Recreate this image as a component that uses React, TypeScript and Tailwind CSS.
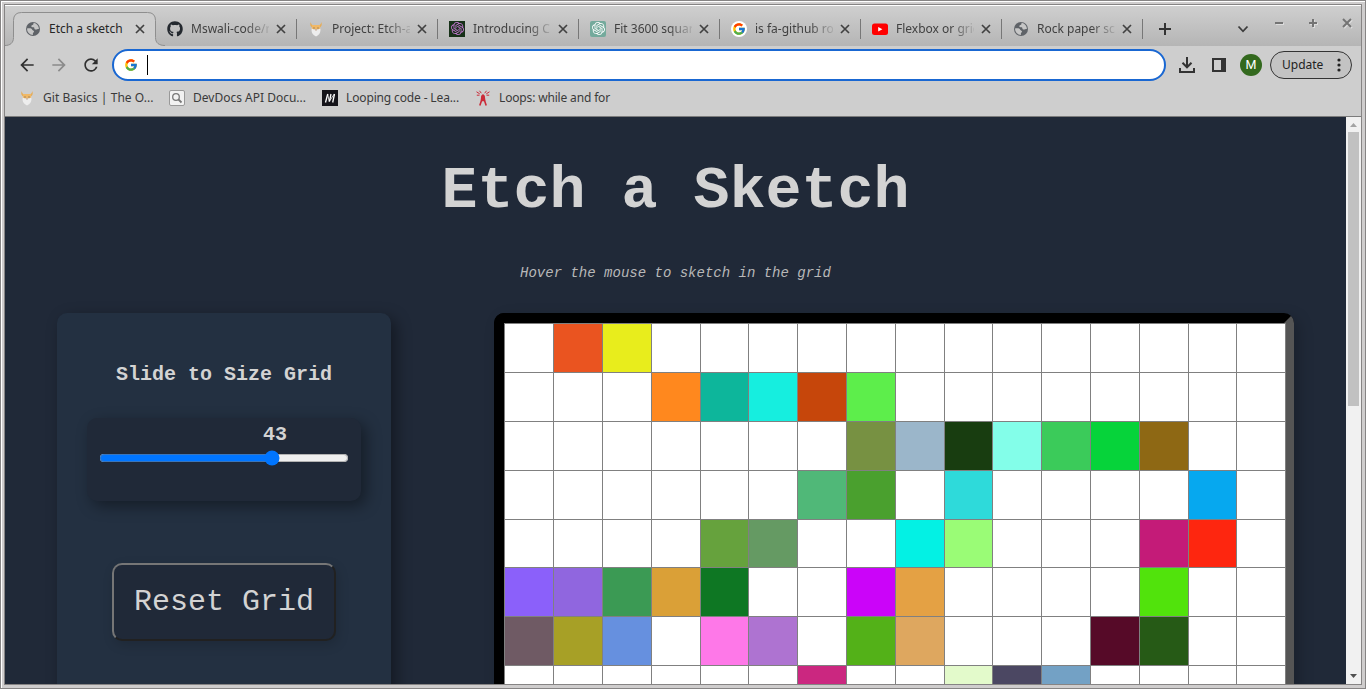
import { useState, type ReactNode } from "react";
import { FaGithub } from "react-icons/fa";
import { SiOpenai } from "react-icons/si";
import { FcGoogle } from "react-icons/fc";
import { MdArrowBack, MdArrowForward, MdRefresh } from "react-icons/md";

const Globe = () => (
  <svg width="16" height="16" viewBox="0 0 16 16">
    <circle cx="8" cy="8" r="7" fill="#5f6368" />
    <path d="M8.6 1.8c-.3.9.2 1.3-.6 2-.8.6-1.700.5-1.700 1.500 0 .9.9 1 1.800 1 1 0 1.300.5 1.300 1.300 0 .7.6 1 1.400 1 1 0 1.600-.4 3.100-.5A6.100 6.100 0 0 0 8.600 1.800z" fill="#c6c6c6" />
    <path d="M2 7.500c1.500-.2 3.600-.3 4.500.3.8.6.6 1.300 1.500 1.600.9.3 1.200.8.9 1.500-.3.6-1 .6-1 1.400v1.600A6.100 6.100 0 0 1 2 7.500z" fill="#c6c6c6" />
  </svg>
);

const Fox = () => (
  <svg width="16" height="16" viewBox="0 0 16 16">
    <path d="M2.800 1c.1 2 1 3.200 2.700 3.200h5c1.700 0 2.600-1.200 2.700-3.200 1 2 .6 4-.7 5h-9C2.200 5 1.800 3 2.800 1z" fill="#e5ad5a" />
    <path d="M4 4h8l.2 4.500H3.800z" fill="#f0b866" />
    <path d="M3.600 7.500 6 8.500h4l2.400-1c.3 3-.4 5.500-2.400 6.800L8 15.500l-2-1.200C4 13 3.300 10.500 3.600 7.500z" fill="#ededed" />
    <path d="M5.400 6.500h1.200v1H5.400zM9.400 6.500h1.200v1H9.400z" fill="#806851" />
    <path d="M7 8.600h2L8 10z" fill="#b88f72" />
  </svg>
);

const Youtube = () => (
  <svg width="16" height="16" viewBox="0 0 16 16">
    <rect x="0" y="2.500" width="16" height="11.500" rx="2.500" fill="#f00" />
    <path d="M6.200 6v4.600l4.200-2.300z" fill="#fff" />
  </svg>
);

const Tower = () => (
  <svg width="16" height="16" viewBox="0 0 16 16" fill="none" stroke="#cb2a38">
    <path d="M4.500.8l1.800 2.400M11.500.8 9.700 3.200M1.500 1.800l3.200 2M14.500 1.800l-3.200 2M1.800 5.200h2.700M14.200 5.200h-2.700" strokeWidth="1" />
    <path d="M7 6 6.300 11 4.800 15.600M9 6l.7 5 1.500 4.600" strokeWidth="1.600" />
    <path d="M6.700 5.200 8 3.900l1.300 1.300.3 6H6.400z" fill="#cb2a38" stroke="none" />
  </svg>
);

const Close = () => (
  <svg width="16" height="16" viewBox="0 0 16 16" className="shrink-0">
    <path d="M4 4l8 8M12 4l-8 8" stroke="#414141" strokeWidth="1.700" />
  </svg>
);

const tabs: { title: string; icon: ReactNode }[] = [
  { title: "Etch a sketch", icon: <Globe /> },
  { title: "Mswali-code/rock", icon: <FaGithub size={16} color="#24292f" /> },
  { title: "Project: Etch-a-Sketch", icon: <Fox /> },
  {
    title: "Introducing ChatGPT",
    icon: (
      <span className="flex size-4 items-center justify-center bg-[#173118]">
        <SiOpenai size={13} color="#c678d4" />
      </span>
    ),
  },
  {
    title: "Fit 3600 squares",
    icon: (
      <span className="flex size-4 items-center justify-center rounded-[2px] bg-[#74aa9c]">
        <SiOpenai size={13} color="#fff" />
      </span>
    ),
  },
  {
    title: "is fa-github rotate",
    icon: (
      <span className="flex size-4 items-center justify-center rounded-full bg-white">
        <FcGoogle size={14} />
      </span>
    ),
  },
  { title: "Flexbox or grid", icon: <Youtube /> },
  { title: "Rock paper scissors", icon: <Globe /> },
];

function TabStrip() {
  return (
    <div className="flex h-[41px] border-t border-white bg-linear-to-b from-[#cfcfcf] to-[#b5b5b5] pl-2">
      {tabs.map((tab, i) => (
        <div
          key={tab.title}
          className={
            i === 0
              ? "relative flex h-[40px] w-[142px] shrink-0 items-center pt-[5px] pl-[12px]"
              : "flex h-[40px] w-[141px] shrink-0 items-center pt-[5px] pl-[12px]"
          }
        >
          {i === 0 && (
            <svg className="absolute top-[6px] -left-[8px]" width="160" height="35" viewBox="0 0 160 35">
              <path d="M0 33.500C5 33.500 8.500 31 8.500 25.500V8.500Q8.500.5 16.500.5H142.500Q150.500.5 150.500 8.500V25.500C150.500 31 154 33.500 160 33.500V35H0z" fill="#cecece" />
              <path d="M0 33.500C5 33.500 8.500 31 8.500 25.500V8.500Q8.500.5 16.500.5H142.500Q150.500.5 150.500 8.500V25.500C150.500 31 154 33.500 160 33.500" fill="none" stroke="#8e8e8e" />
            </svg>
          )}
          <span className="relative size-4 shrink-0">{tab.icon}</span>
          <span
            className={
              i === 0
                ? "relative ml-2 w-[83px] overflow-hidden whitespace-nowrap text-[#262626]"
                : "ml-2 mr-[4px] w-[78px] shrink-0 overflow-hidden whitespace-nowrap text-[#414141] [mask-image:linear-gradient(to_right,black_54px,transparent_82px)]"
            }
          >
            {tab.title}
          </span>
          <span className="relative">
            <Close />
          </span>
          {i > 0 && <span className="-mr-px ml-[7px] h-5 w-px shrink-0 bg-[#777]" />}
        </div>
      ))}
      <div className="flex flex-1 items-center pt-[5px]">
        <svg className="ml-[15px]" width="16" height="16" viewBox="0 0 16 16">
          <path d="M8 2v12M2 8h12" stroke="#333" strokeWidth="2" />
        </svg>
        <svg className="ml-[62px]" width="16" height="16" viewBox="0 0 16 16">
          <path d="M3.500 5.500 8 10.300l4.500-4.800" fill="none" stroke="#3c3c3c" strokeWidth="1.800" />
        </svg>
        <div className="-mt-[12px] ml-[20px] flex gap-[18px] [filter:drop-shadow(1px_1px_0_#ddd)]">
          <svg width="16" height="16" viewBox="0 0 16 16">
            <path d="M4 8h8" stroke="#747474" strokeWidth="2" />
          </svg>
          <svg width="16" height="16" viewBox="0 0 16 16">
            <path d="M4 8h8M8 4v8" stroke="#747474" strokeWidth="2" />
          </svg>
          <svg width="16" height="16" viewBox="0 0 16 16">
            <path d="M4 4l8 8M12 4l-8 8" stroke="#747474" strokeWidth="2" />
          </svg>
        </div>
      </div>
    </div>
  );
}

function Toolbar() {
  return (
    <div className="flex h-[38px] items-center pl-3">
      <MdArrowBack size={20} color="#303030" />
      <MdArrowForward size={20} color="#8b8b8b" className="ml-3" />
      <MdRefresh size={20} color="#303030" className="ml-3" />
      <div className="ml-[11px] flex h-8 w-[1054px] items-center rounded-full border-2 border-[#1967d2] bg-white pl-[10px]">
        <FcGoogle size={14} />
        <span className="ml-[9px] h-5 w-px bg-black" />
      </div>
      <svg className="ml-[13px]" width="16" height="16" viewBox="0 0 16 16" fill="none" stroke="#333" strokeWidth="2">
        <path d="M8 0v10M3.500 5.800 8 10.300l4.500-4.500M1 11v4h14v-4" />
      </svg>
      <svg className="ml-[17px]" width="14" height="14" viewBox="0 0 14 14">
        <path d="M0 0h14v14H0zM2 2v10h7V2z" fill="#333" fillRule="evenodd" />
      </svg>
      <span className="ml-[14px] flex size-[22px] items-center justify-center rounded-full bg-[#33691e] font-[Roboto,sans-serif] text-[12.500px] text-white">
        M
      </span>
      <div className="ml-2 flex h-7 w-[82px] items-center rounded-full border border-[#333] bg-[#c3c3c3] pl-[11px] text-[12px] text-[#222]">
        Update
        <svg className="ml-auto mr-[10px]" width="4" height="14" viewBox="0 0 4 14" fill="#222">
          <circle cx="2" cy="2" r="1.600" />
          <circle cx="2" cy="7" r="1.600" />
          <circle cx="2" cy="12" r="1.600" />
        </svg>
      </div>
    </div>
  );
}

function Bookmarks() {
  return (
    <div className="flex h-[32px] items-center pb-[5px] pl-[14px] text-[#3a3a3a]">
      <div className="flex w-[150px] items-center gap-2 tracking-[0.05px]">
        <Fox />
        Git Basics | The O...
      </div>
      <div className="flex w-[153px] items-center gap-2">
        <svg width="16" height="16" viewBox="0 0 16 16" fill="none">
          <rect x=".5" y=".5" width="15" height="15" rx="1.500" fill="#f2f2f2" stroke="#999" />
          <circle cx="7" cy="7" r="3.300" stroke="#777" strokeWidth="1.300" />
          <path d="M9.500 9.500 12.500 12.500" stroke="#777" strokeWidth="1.800" />
        </svg>
        DevDocs API Docu...
      </div>
      <div className="flex w-[153px] items-center gap-2 tracking-[-0.14px]">
        <svg width="16" height="16" viewBox="0 0 16 16" fill="none" stroke="#fff">
          <path d="M0 0h16v16H0z" fill="#15141a" stroke="none" />
          <path d="M3.500 12.500 5.700 4M7.400 11.500 9 4M10.700 12.500 12.500 4" strokeWidth="1.300" />
          <path d="M5.700 4 7.200 11.500 12.300 4" strokeWidth=".8" />
        </svg>
        Looping code - Lea...
      </div>
      <div className="flex items-center gap-2 tracking-[-0.16px]">
        <Tower />
        Loops: while and for
      </div>
    </div>
  );
}

const COLUMNS = 16;
const sketch: Record<number, string>[] = [
  { 1: "#ea5420", 2: "#e8ed1c" },
  { 3: "#ff881e", 4: "#0db69b", 5: "#16eedf", 6: "#c6460b", 7: "#5dee4b" },
  { 7: "#779142", 8: "#9bb6ca", 9: "#183d10", 10: "#83fee9", 11: "#3bcb5a", 12: "#06d33a", 13: "#8e6814" },
  { 6: "#50b878", 7: "#4aa02e", 9: "#2edada", 14: "#06a8ef" },
  { 4: "#66a23d", 5: "#659a63", 8: "#03f1e4", 9: "#9afc76", 13: "#c41b78", 14: "#fe260f" },
  { 0: "#8b60fa", 1: "#9066df", 2: "#3b9a54", 3: "#daa037", 4: "#0e7723", 7: "#cb04f9", 8: "#e4a144", 13: "#51e30c" },
  { 0: "#6f5a64", 1: "#a7a026", 2: "#6690df", 4: "#fe78e8", 5: "#ae73d1", 7: "#53b118", 8: "#dea75f", 12: "#560a28", 13: "#265a16" },
  { 6: "#cb2780", 9: "#e3facb", 10: "#4b4762", 11: "#73a1c5" },
];

function SketchGrid() {
  return (
    <div className="ml-[103px] h-[800px] w-[800px] shrink-0 rounded-[10px] border-10 border-t-black border-r-[#555] border-b-[#555] border-l-black pt-[0.4px] pl-[0.4px] shadow-[5px_5px_15px_rgba(0,0,0,0.2)]">
      <div className="grid w-[781.8px] auto-rows-[48.8px] grid-cols-[repeat(16,48.8px)] border-r border-[#808080] bg-white">
        {sketch.flatMap((row, r) =>
          Array.from({ length: COLUMNS }, (_, c) => (
            <div key={`${r}-${c}`} className="border-t border-l border-[#808080]" style={{ backgroundColor: row[c] ?? "#ffffff" }} />
          )),
        )}
      </div>
    </div>
  );
}

function Page() {
  const [size, setSize] = useState(43);
  return (
    <main className="h-[567px] flex-1 overflow-hidden bg-[#202938] font-['Liberation_Mono',monospace] text-[#d3d3d3]">
      <h1 className="pt-[40px] text-center text-[60px] leading-[68px] font-bold">Etch a Sketch</h1>
      <p className="mt-[40px] text-center text-[14px] leading-4 text-[#b8b8b8] italic">Hover the mouse to sketch in the grid</p>
      <div className="mt-[32px] flex pl-[52px]">
        <section className="flex h-[800px] w-[334px] shrink-0 flex-col items-center rounded-[10px] bg-[#233041] shadow-[5px_5px_15px_rgba(0,0,0,0.4)]">
          <h2 className="mt-[50px] text-[20px] leading-6 font-bold">Slide to Size Grid</h2>
          <div className="mt-[31px] flex h-[83px] w-[274px] flex-col rounded-[10px] bg-[#202938] pt-[5px] pl-[12px] shadow-[5px_5px_15px_rgba(0,0,0,0.4)]">
            <output className="ml-[163px] w-[26px] text-center text-[20px] leading-6 font-bold">{size}</output>
            <input
              type="range"
              min={2}
              max={60}
              value={size}
              onChange={(e) => setSize(Number(e.target.value))}
              className="mt-[3px] h-4 w-[250px]"
            />
          </div>
          <button className="mt-[62px] h-[78px] w-[224px] rounded-[10px] border-2 border-t-[#767676] border-r-[#212121] border-b-[#212121] border-l-[#767676] bg-[#202938] text-[30px] shadow-[2px_4px_12px_rgba(0,0,0,0.15)]">
            Reset Grid
          </button>
        </section>
        <SketchGrid />
      </div>
    </main>
  );
}

function Scrollbar() {
  return (
    <div className="flex w-[15px] flex-col items-center bg-[#f1f1f1]">
      <svg width="15" height="15" viewBox="0 0 15 15">
        <path d="M4 10h7L7.500 6z" fill="#a3a3a3" />
      </svg>
      <div className="h-[274px] w-[11px] bg-[#c1c1c1]" />
      <svg className="mt-auto" width="15" height="15" viewBox="0 0 15 15">
        <path d="M4 5h7L7.500 9z" fill="#505050" />
      </svg>
    </div>
  );
}

export default function App() {
  return (
    <div className="h-[689px] w-[1366px] overflow-hidden border border-[#868484] bg-[#cfcdcd] font-['Noto_Sans',sans-serif] text-[12px]">
      <div className="h-[687px] border-t border-l border-white pt-[2px] pr-[3px] pb-[3px] pl-[2px]">
        <div className="h-full overflow-hidden border border-[#868484] bg-[#cecece]">
          <TabStrip />
          <Toolbar />
          <Bookmarks />
          <div className="flex border-t border-[#7c7c7c]">
            <Page />
            <Scrollbar />
          </div>
        </div>
      </div>
    </div>
  );
}
